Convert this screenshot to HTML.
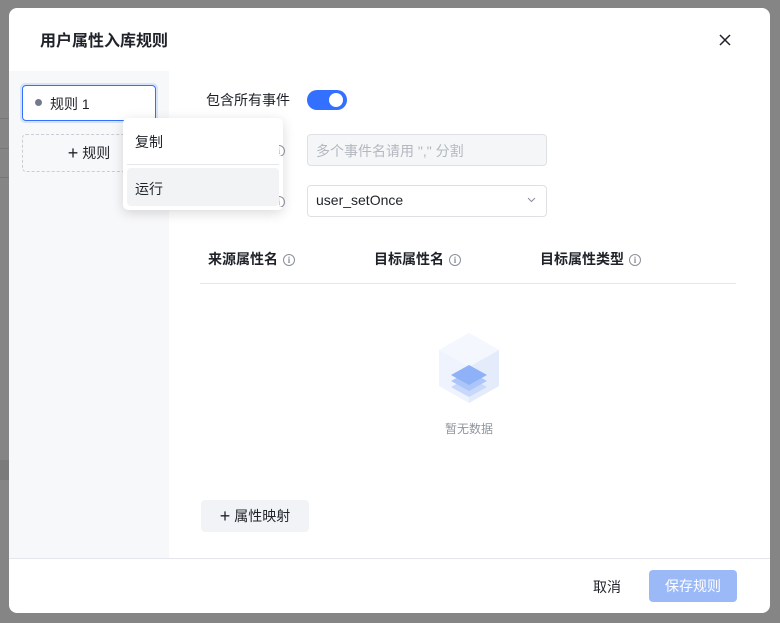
<!DOCTYPE html>
<html><head><meta charset="utf-8"><style>
*{box-sizing:border-box;margin:0;padding:0}
body{width:780px;height:623px;overflow:hidden;background:#858585;font-family:"Liberation Sans","Noto Sans CJK SC",sans-serif;font-size:14px;color:#1f2329;position:relative}
.a{position:absolute}
.modal{left:9px;top:8px;width:761px;height:605px;background:#fff;border-radius:8px;overflow:hidden}
.side{left:0;top:63px;width:160px;height:487px;background:#f7f8fa}
.info{display:inline-block;width:12px;height:12px;border:1px solid #8a8f99;border-radius:50%;font-size:9px;line-height:10px;text-align:center;color:#8a8f99;vertical-align:middle;margin-left:5px;font-family:"Liberation Serif",serif}
</style></head><body>
<div class="a" style="left:0;top:118px;width:9px;height:1px;background:#777"></div>
<div class="a" style="left:0;top:148px;width:9px;height:1px;background:#777"></div>
<div class="a" style="left:0;top:177px;width:9px;height:1px;background:#777"></div>
<div class="a" style="left:0;top:460px;width:9px;height:20px;background:#7b7b7b"></div>
<div class="a modal">
 <div class="a" style="left:31px;top:19px;font-size:16px;font-weight:bold;color:#1f2329">用户属性入库规则</div>
 <svg class="a" style="left:710px;top:26px" width="12" height="12" viewBox="0 0 12 12"><path d="M1 1L11 11M11 1L1 11" stroke="#1f2329" stroke-width="1.5"/></svg>
 <div class="a side">
  <div class="a" style="left:11px;top:12px;width:138px;height:40px;border:3px solid #d6e4fb;border-radius:5px"></div>
  <div class="a" style="left:13px;top:14px;width:134px;height:36px;border:1px solid #3370ff;border-radius:4px;background:#fff"></div>
  <div class="a" style="left:26px;top:28px;width:7px;height:7px;border-radius:50%;background:#737a8c"></div>
  <div class="a" style="left:41px;top:23px;font-size:14px">规则 1</div>
  <div class="a" style="left:13px;top:63px;width:134px;height:38px;border:1px dashed #c9cdd4;border-radius:4px;text-align:center;line-height:36px;font-size:14px"><span style="font-size:18px;vertical-align:-1px">+</span> 规则</div>
 </div>
 <div class="a" style="left:114px;top:110px;width:160px;height:92px;background:#fff;border-radius:5px;box-shadow:0 3px 12px rgba(0,0,0,.15)">
  <div class="a" style="left:12px;top:14px">复制</div>
  <div class="a" style="left:4px;top:46px;width:152px;height:1px;background:#e5e6eb"></div>
  <div class="a" style="left:4px;top:50px;width:152px;height:38px;background:#f2f3f5;border-radius:4px"></div>
  <div class="a" style="left:12px;top:61px">运行</div>
 </div>
 <div class="a" style="left:197px;top:82px">包含所有事件</div>
 <div class="a" style="left:298px;top:82px;width:40px;height:20px;border-radius:10px;background:#3370ff"><div class="a" style="left:22px;top:3px;width:14px;height:14px;border-radius:50%;background:#fff"></div></div>
 <div class="a" style="left:270px;top:134px;width:12px;height:14px;overflow:hidden"><span class="info" style="margin-left:-6px">i</span></div>
 <div class="a" style="left:298px;top:126px;width:240px;height:32px;border:1px solid #dee0e3;border-radius:4px;background:#f5f6f7;color:#b3b8c0;padding:6px 8px">多个事件名请用 "," 分割</div>
 <div class="a" style="left:270px;top:185px;width:12px;height:14px;overflow:hidden"><span class="info" style="margin-left:-6px">i</span></div>
 <div class="a" style="left:298px;top:177px;width:240px;height:32px;border:1px solid #dee0e3;border-radius:4px;padding:6px 8px">user_setOnce</div>
 <svg class="a" style="left:518px;top:189px" width="9" height="6" viewBox="0 0 9 6"><path d="M1 1L4.5 4.5L8 1" stroke="#8a8f99" fill="none"/></svg>
 <div class="a" style="left:199px;top:241px;font-weight:bold">来源属性名<span class="info">i</span></div>
 <div class="a" style="left:365px;top:241px;font-weight:bold">目标属性名<span class="info">i</span></div>
 <div class="a" style="left:531px;top:241px;font-weight:bold">目标属性类型<span class="info">i</span></div>
 <div class="a" style="left:191px;top:275px;width:536px;height:1px;background:#e5e6eb"></div>
 <svg class="a" style="left:428px;top:323px" width="64" height="74" viewBox="0 0 64 74">
  <path d="M32 2L62 19V55L32 72L2 55V19Z" fill="#eef3fd"/>
  <path d="M32 2L62 19L32 36L2 19Z" fill="#f4f7fe"/>
  <path d="M32 36L62 19V55L32 72Z" fill="#e4ecfc"/>
  <path d="M32 46L50 56L32 66L14 56Z" fill="#c7d8fb"/>
  <path d="M32 40L50 50L32 60L14 50Z" fill="#adc6f9"/>
  <path d="M32 34L50 44L32 54L14 44Z" fill="#8fb1f7"/>
 </svg>
 <div class="a" style="left:436px;top:412px;font-size:12px;color:#8f959e">暂无数据</div>
 <div class="a" style="left:192px;top:492px;width:108px;height:32px;background:#f2f3f7;border-radius:4px;text-align:center;line-height:32px"><span style="font-size:18px;vertical-align:-1px">+</span> 属性映射</div>
 <div class="a" style="left:0;top:550px;width:761px;height:1px;background:#e5e6eb"></div>
 <div class="a" style="left:584px;top:569px">取消</div>
 <div class="a" style="left:640px;top:562px;width:88px;height:32px;background:#9bb8f7;border-radius:4px;color:#fff;text-align:center;line-height:32px">保存规则</div>
</div>
</body></html>
